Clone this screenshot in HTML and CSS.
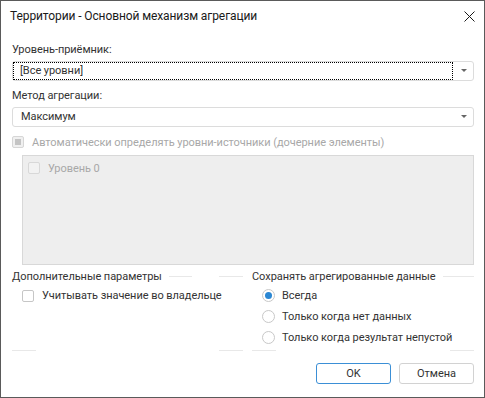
FILE: index.html
```html
<!DOCTYPE html>
<html lang="ru">
<head>
    <meta charset="UTF-8">
    <title>Территории - Основной механизм агрегации</title>
    <link rel="stylesheet" href="styles.css">
</head>
<body>
    <div class="dialog">
        <div class="titlebar">
            <span class="title">Территории - Основной механизм агрегации</span>
            <svg class="close" width="11" height="11" viewBox="0 0 11 11">
                <path d="M0.5 0.5 L10.5 10.5 M10.5 0.5 L0.5 10.5" stroke="#1a1a1a" stroke-width="1" fill="none"/>
            </svg>
        </div>

        <div class="content">
            <div class="label">Уровень-приёмник:</div>
            <div class="combo">
                <span class="value focus">[Все уровни]</span>
                <span class="arrow"></span>
            </div>

            <div class="label">Метод агрегации:</div>
            <div class="combo">
                <span class="value">Максимум</span>
                <span class="arrow"></span>
            </div>

            <div class="check disabled">
                <span class="box partial"></span>
                Автоматически определять уровни-источники (дочерние элементы)
            </div>

            <div class="listbox">
                <div class="check disabled">
                    <span class="box"></span>
                    Уровень 0
                </div>
            </div>

            <div class="groups">
                <div class="group">
                    <div class="group-head">
                        <span>Дополнительные параметры</span>
                        <span class="seg seg-a"></span>
                        <span class="spacer"></span>
                        <span class="seg seg-b"></span>
                    </div>
                    <div class="group-body">
                        <div class="check row">
                            <span class="box"></span>
                            Учитывать значение во владельце
                        </div>
                    </div>
                    <div class="group-foot">
                        <span class="seg seg-b"></span>
                        <span class="spacer"></span>
                        <span class="seg seg-b"></span>
                    </div>
                </div>

                <div class="group">
                    <div class="group-head">
                        <span>Сохранять агрегированные данные</span>
                        <span class="seg seg-fill"></span>
                    </div>
                    <div class="group-body">
                        <div class="radio row"><span class="dot checked"></span>Всегда</div>
                        <div class="radio row"><span class="dot"></span>Только когда нет данных</div>
                        <div class="radio row"><span class="dot"></span>Только когда результат непустой</div>
                    </div>
                    <div class="group-foot">
                        <span class="seg seg-b"></span>
                        <span class="spacer"></span>
                        <span class="seg seg-b"></span>
                    </div>
                </div>
            </div>

            <div class="buttons">
                <button class="button default">OK</button>
                <button class="button">Отмена</button>
            </div>
        </div>
    </div>
</body>
</html>
```

FILE: styles.css
```css
* {
    box-sizing: border-box;
}
body {
    margin: 0;
    font-family: Roboto, "Noto Sans", sans-serif;
    font-size: 11px;
    letter-spacing: -0.05px;
    color: #333;
    background: #fff;
}
.dialog {
    width: 485px;
    height: 398px;
    border: 1px solid #5a5a5a;
    background: white;
}
.titlebar {
    height: 30px;
    display: flex;
    align-items: center;
    justify-content: space-between;
    padding: 0 9px 0 9px;
}
.title {
    color: #1a1a1a;
    font-size: 12px;
    letter-spacing: -0.1px;
}
.close {
    display: block;
}
.content {
    padding: 10px 10px 0 11px;
    white-space: nowrap;
}
.label {
    height: 18px;
    line-height: 18px;
}
.combo {
    height: 20px;
    margin: 2px 0 6px;
    border: 1px solid #dcdcdc;
    border-radius: 3px;
    display: flex;
}
.value {
    flex: 1;
    line-height: 16px;
    padding-left: 7px;
    border: 1px solid transparent;
}
.value.focus {
    border: 1px dotted #000;
    padding-left: 6px;
}
.arrow {
    width: 20px;
    position: relative;
}
.arrow::after {
    content: "";
    position: absolute;
    left: 8px;
    top: 7px;
    border-left: 3px solid transparent;
    border-right: 3px solid transparent;
    border-top: 3px solid #666;
}
.check, .radio {
    display: flex;
    align-items: center;
    height: 18px;
}
.box {
    width: 12px;
    height: 12px;
    border: 1px solid #c6c6c6;
    border-radius: 2px;
    background: white;
    margin-right: 8px;
    display: flex;
    align-items: center;
    justify-content: center;
    flex: none;
}
.disabled {
    color: #a8a8a8;
}
.disabled .box {
    border-color: #d6d6d6;
    background: #f0f0f0;
}
.box.partial::after {
    content: "";
    width: 6px;
    height: 6px;
    background: #c4c4c4;
}
.content > .check {
    margin-top: 6px;
}
.listbox {
    margin: 4px 0 0 10px;
    height: 110px;
    background: #eeeeee;
    border: 1px solid #d8d8d8;
    padding: 3px 5px;
}
.listbox .box {
    border-color: #d8d8d8;
    background: #f2f2f2;
}
.groups {
    margin-top: 3px;
    display: grid;
    grid-template-columns: 231px 1fr;
    column-gap: 9px;
}
.group-head {
    height: 17px;
    display: flex;
    align-items: center;
}
.seg {
    height: 1px;
    background: #e8e8e8;
}
.seg-a {
    width: 23px;
    margin-left: 7px;
}
.seg-b {
    width: 24px;
}
.seg-fill {
    flex: 1;
    margin-left: 7px;
}
.spacer {
    flex: 1;
}
.group-body {
    height: 63px;
}
.row {
    height: 21px;
    padding-left: 10px;
}
.dot {
    width: 13px;
    height: 13px;
    border: 1px solid #c8c8c8;
    border-radius: 50%;
    margin-right: 7px;
    display: flex;
    align-items: center;
    justify-content: center;
    flex: none;
}
.dot.checked::after {
    content: "";
    width: 7px;
    height: 7px;
    border-radius: 50%;
    background: #2b87d3;
}
.group-foot {
    margin-top: 2px;
    height: 1px;
    display: flex;
}
.buttons {
    margin-top: 12px;
    display: flex;
    justify-content: flex-end;
    gap: 8px;
}
.button {
    width: 75px;
    height: 21px;
    font-family: inherit;
    font-size: 11px;
    color: #333;
    background: white;
    border: 1px solid #d2d2d2;
    border-radius: 3px;
    padding: 0;
}
.button.default {
    border-color: #3b8fd6;
}
```
